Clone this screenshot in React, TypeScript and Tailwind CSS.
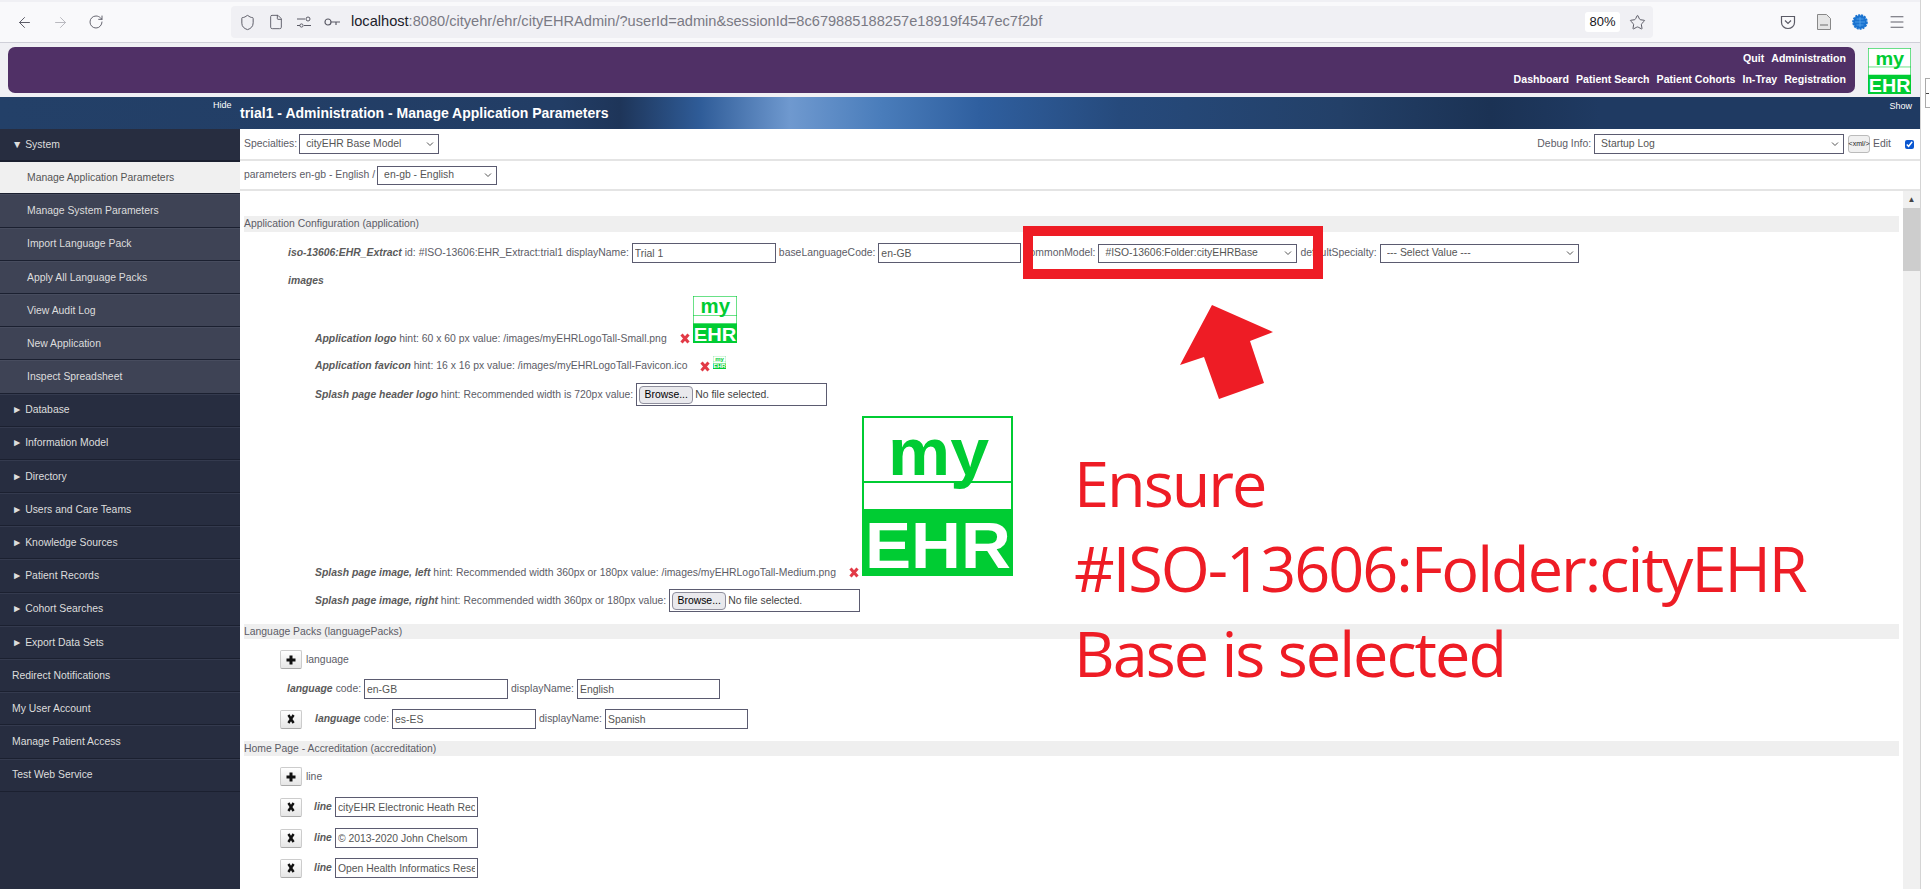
import React from 'react';
import { ArrowLeft, ArrowRight, RotateCw, Shield, File, Star, Menu } from 'lucide-react';

const systemItems = [
  'Manage System Parameters',
  'Import Language Pack',
  'Apply All Language Packs',
  'View Audit Log',
  'New Application',
  'Inspect Spreadsheet',
];

const folders = [
  'Database',
  'Information Model',
  'Directory',
  'Users and Care Teams',
  'Knowledge Sources',
  'Patient Records',
  'Cohort Searches',
  'Export Data Sets',
];

const links = ['Redirect Notifications', 'My User Account', 'Manage Patient Access', 'Test Web Service'];

const Logo: React.FC<{ w: number; h: number }> = ({ w, h }) => (
  <svg width={w} height={h} viewBox="0 0 151 160" preserveAspectRatio="none" className="shrink-0 self-start">
    <rect x="1" y="1" width="149" height="158" fill="#fff" stroke="#00cc33" strokeWidth="2" />
    <rect x="0" y="65" width="151" height="2" fill="#00cc33" />
    <rect x="0" y="93" width="151" height="67" fill="#00cc33" />
    <text x="26" y="59" fontFamily="Liberation Sans, sans-serif" fontWeight="700" fontSize="67" fill="#00cc33" textLength="101" lengthAdjust="spacingAndGlyphs">my</text>
    <text x="3" y="152" fontFamily="Liberation Sans, sans-serif" fontWeight="700" fontSize="64" fill="#fff" textLength="146" lengthAdjust="spacingAndGlyphs">EHR</text>
  </svg>
);

const Chevron = () => (
  <svg width="8" height="5" viewBox="0 0 8 5" className="absolute right-[5px] top-1/2 -translate-y-1/2 pointer-events-none">
    <path d="M1 1l3 3 3-3" fill="none" stroke="#555" strokeWidth="1" />
  </svg>
);

const Select: React.FC<{ value: string; className: string }> = ({ value, className }) => (
  <div className={`relative shrink-0 ${className}`}>
    <select
      defaultValue={value}
      className="appearance-none w-full h-full border border-[#5b5b70] bg-white pl-[6px] text-[10.4px] text-[#555] outline-none"
    >
      <option>{value}</option>
    </select>
    <Chevron />
  </div>
);

const Field: React.FC<{ value: string; className: string }> = ({ value, className }) => (
  <input
    readOnly
    defaultValue={value}
    className={`shrink-0 h-[20px] border border-[#5b5b70] bg-white px-[2px] text-[10.4px] text-[#555] outline-none ${className}`}
  />
);

const FilePicker: React.FC<{ className: string }> = ({ className }) => (
  <div className={`shrink-0 w-[191px] h-[23px] border border-[#5b5b70] bg-white flex items-center pl-[2px] text-[10.4px] text-[#444] ${className}`}>
    <span className="h-[18px] w-[54px] mr-[2px] flex items-center justify-center rounded-[4px] border border-[#8f8f9d] bg-[#e9e9ed] text-black">Browse...</span>
    No file selected.
  </div>
);

const IconButton: React.FC<{ kind: 'plus' | 'x' }> = ({ kind }) => (
  <button className="shrink-0 w-[22px] h-[19px] flex items-center justify-center rounded-[2px] border border-[#ccc] border-b-[#aaa] bg-[linear-gradient(#fff,#e6e6e6)]">
    <svg width="10" height="10" viewBox="0 0 10 10">
      {kind === 'plus' ? (
        <path d="M5 .5v9M.5 5h9" stroke="#111" strokeWidth="3" />
      ) : (
        <path d="M2.4 1l5.2 8M7.6 1l-5.2 8" stroke="#111" strokeWidth="2.4" />
      )}
    </svg>
  </button>
);

const RedCross = () => (
  <svg width="10" height="11" viewBox="0 0 10 11" className="shrink-0">
    <path d="M1.5 1.5l7 8M8.5 1.5l-7 8" stroke="#e23a46" strokeWidth="3" />
  </svg>
);

const Heading: React.FC<{ text: string; className: string }> = ({ text, className }) => (
  <div className={`flex items-center bg-[#efefef] mr-[4px] text-[10.4px] text-[#5c5c66] ${className}`}>{text}</div>
);

const Label: React.FC<{ children: React.ReactNode }> = ({ children }) => (
  <b className="italic font-bold text-[#5a5a5a]">{children}</b>
);

const BrowserBar = () => (
  <div className="h-[43px] shrink-0 flex items-center bg-[#f9f9fb] border-b border-[#cfcfd8] border-t-2 border-t-[#f0f0f4] text-[#5b5b66]">
    <ArrowLeft size={17} strokeWidth={1.4} className="ml-[16px]" />
    <ArrowRight size={17} strokeWidth={1.4} className="ml-[19px] text-[#b8b8be]" />
    <RotateCw size={16} strokeWidth={1.4} className="ml-[19px]" />
    <div className="ml-[127px] w-[1422px] h-[32px] flex items-center rounded-[4px] bg-[#f0f0f4]">
      <Shield size={17} strokeWidth={1.4} className="ml-[8px]" />
      <File size={16} strokeWidth={1.4} className="ml-[12px]" />
      <svg width="16" height="16" viewBox="0 0 16 16" className="ml-[12px]" fill="none" stroke="currentColor">
        <path d="M1 5h8M1 11.5h3M8 11.5h7" />
        <circle cx="12" cy="5" r="2" />
        <circle cx="5.5" cy="11.5" r="1.6" />
      </svg>
      <svg width="16" height="12" viewBox="0 0 16 12" className="ml-[12px]" fill="none" stroke="currentColor" strokeWidth="1.2">
        <circle cx="4" cy="6" r="3" />
        <path d="M7 6h9M12 6v3" />
      </svg>
      <div className="ml-[11px] flex-1 font-['Liberation_Sans',sans-serif] text-[14.6px] text-[#7a7a84] whitespace-nowrap">
        <span className="text-[#20202a]">localhost</span>:8080/cityehr/ehr/cityEHRAdmin/?userId=admin&amp;sessionId=8c679885188257e18919f4547ec7f2bf
      </div>
      <div className="w-[35px] h-[20px] mr-[9px] flex items-center justify-center rounded-[3px] bg-white text-[13px] text-[#15141a]">80%</div>
      <Star size={17} strokeWidth={1.4} className="mr-[7px]" />
    </div>
    <svg width="16" height="16" viewBox="0 0 16 16" className="ml-[127px]" fill="none" stroke="currentColor" strokeWidth="1.2">
      <path d="M1.5 2.5h13v6a6.5 6 0 0 1-13 0z" />
      <path d="M5 6.5l3 3 3-3" />
    </svg>
    <svg width="14" height="16" viewBox="0 0 14 16" className="ml-[21px]">
      <path d="M.5.5h9l4 4v11H.5z" fill="#e6e6e6" stroke="#888" />
      <rect x="3" y="10" width="8" height="2" fill="#aaa" />
    </svg>
    <svg width="16" height="16" viewBox="0 0 16 16" className="ml-[21px]">
      <circle cx="8" cy="8" r="6.8" fill="#1a73d0" stroke="#1a73d0" strokeDasharray="2 1" strokeWidth="2" />
      <path d="M3 8h10M8 3v10M4.5 5h7M4.5 11h7" stroke="#63aef0" strokeWidth=".7" />
    </svg>
    <Menu size={18} strokeWidth={1.3} className="ml-[20px]" />
  </div>
);

const TopHeader = () => (
  <div className="h-[54px] shrink-0 flex items-start bg-[#f0f0f4] pt-[4px] pl-[8px]">
    <div className="w-[1847px] h-[46px] rounded-[7px] bg-[#503066] flex flex-col items-end pr-[9px] text-[10.6px] font-bold text-white">
      <div className="mt-[5px] h-[12px] leading-[12px] flex gap-[7px]">
        <span>Quit</span>
        <span>Administration</span>
      </div>
      <div className="mt-[9px] h-[12px] leading-[12px] flex gap-[7px]">
        <span>Dashboard</span>
        <span>Patient Search</span>
        <span>Patient Cohorts</span>
        <span>In-Tray</span>
        <span>Registration</span>
      </div>
    </div>
    <div className="ml-[13px] mt-[1px]">
      <Logo w={43} h={46} />
    </div>
  </div>
);

const Banner = () => (
  <div className="h-[32px] shrink-0 relative flex items-center pl-[240px] bg-[linear-gradient(90deg,#234068_0px,#223d65_560px,#1e3559_620px,#2f5c98_700px,#6f99cf_790px,#4a7dbb_880px,#2f5f9f_980px,#264a7c_1120px,#234068_1340px,#1b3254_1490px,#1f3a62_1600px,#1f3a62_1920px)] text-white">
    <span className="absolute left-[213px] top-[2px] text-[9px]">Hide</span>
    <span className="text-[14px] font-bold">trial1 - Administration - Manage Application Parameters</span>
    <span className="absolute right-[8px] top-[3px] text-[9px]">Show</span>
  </div>
);

const Sidebar = () => (
  <div className="w-[240px] shrink-0 bg-[#272d40] text-[10.4px] text-[#ddd]">
    <div className="h-[33.2px] pl-[12px] flex items-center border-b-2 border-[#1b2030]">▼&nbsp;System</div>
    <div className="h-[32.2px] pl-[27px] flex items-center bg-[#f0f0f0] text-[#555] border-b border-[#1b2030]">Manage Application Parameters</div>
    {systemItems.map(item => (
      <div key={item} className="h-[33.2px] pl-[27px] flex items-center bg-[#3e4355] border-b border-[#1b2030] border-t border-t-[#474c5e]">
        {item}
      </div>
    ))}
    {folders.map(item => (
      <div key={item} className="h-[33.2px] pl-[12px] flex items-center border-b border-[#1b2030] border-t border-t-[#343a4e]">
        ►&nbsp;{item}
      </div>
    ))}
    {links.map(item => (
      <div key={item} className="h-[33.2px] pl-[12px] flex items-center border-b border-[#1b2030] border-t border-t-[#343a4e]">
        {item}
      </div>
    ))}
  </div>
);

const Content = () => (
  <div className="flex-1 min-w-0 pl-[4px] text-[10.4px] text-[#5c5c66] whitespace-nowrap">
    <Heading text="Application Configuration (application)" className="mt-[25px] h-[16px]" />

    <div className="mt-[11px] h-[20px] ml-[44px] flex items-center gap-[3px]">
      <Label>iso-13606:EHR_Extract</Label>
      <span>id: #ISO-13606:EHR_Extract:trial1 displayName:</span>
      <Field value="Trial 1" className="w-[144px]" />
      <span>baseLanguageCode:</span>
      <Field value="en-GB" className="w-[143px]" />
      <span>commonModel:</span>
      <Select value="#ISO-13606:Folder:cityEHRBase" className="w-[199px] h-[19px]" />
      <span>defaultSpecialty:</span>
      <Select value="--- Select Value ---" className="w-[199px] h-[19px]" />
    </div>

    <div className="mt-[10px] h-[16px] ml-[44px] flex items-center">
      <Label>images</Label>
    </div>

    <div className="mt-[7px] h-[49px] ml-[71px] flex items-end gap-[3px]">
      <span className="leading-[12px]"><Label>Application logo</Label> hint: 60 x 60 px value: /images/myEHRLogoTall-Small.png</span>
      <span className="ml-[10px] mb-[1px]"><RedCross /></span>
      <Logo w={44} h={47} />
    </div>

    <div className="mt-[11px] h-[20px] ml-[71px] flex items-center gap-[3px]">
      <span><Label>Application favicon</Label> hint: 16 x 16 px value: /images/myEHRLogoTall-Favicon.ico</span>
      <span className="ml-[10px]"><RedCross /></span>
      <Logo w={13} h={13} />
    </div>

    <div className="mt-[7px] h-[23px] ml-[71px] flex items-center gap-[3px]">
      <span><Label>Splash page header logo</Label> hint: Recommended width is 720px value:</span>
      <FilePicker className="" />
    </div>

    <div className="mt-[10px] h-[163px] ml-[71px] flex items-end gap-[3px]">
      <span className="leading-[12px]"><Label>Splash page image, left</Label> hint: Recommended width 360px or 180px value: /images/myEHRLogoTall-Medium.png</span>
      <span className="ml-[10px] mb-[1px]"><RedCross /></span>
      <Logo w={151} h={160} />
    </div>

    <div className="mt-[10px] h-[23px] ml-[71px] flex items-center gap-[3px]">
      <span><Label>Splash page image, right</Label> hint: Recommended width 360px or 180px value:</span>
      <FilePicker className="" />
    </div>

    <Heading text="Language Packs (languagePacks)" className="mt-[12px] h-[15px]" />

    <div className="mt-[11px] h-[19px] ml-[36px] flex items-center gap-[4px]">
      <IconButton kind="plus" />
      <span>language</span>
    </div>

    <div className="mt-[10px] h-[20px] ml-[43px] flex items-center gap-[3px]">
      <Label>language</Label>
      <span>code:</span>
      <Field value="en-GB" className="w-[144px]" />
      <span>displayName:</span>
      <Field value="English" className="w-[143px]" />
    </div>

    <div className="mt-[10px] h-[20px] ml-[36px] flex items-center gap-[3px]">
      <IconButton kind="x" />
      <span className="ml-[10px]"><Label>language</Label></span>
      <span>code:</span>
      <Field value="es-ES" className="w-[144px]" />
      <span>displayName:</span>
      <Field value="Spanish" className="w-[143px]" />
    </div>

    <Heading text="Home Page - Accreditation (accreditation)" className="mt-[12px] h-[15px]" />

    <div className="mt-[11px] h-[19px] ml-[36px] flex items-center gap-[4px]">
      <IconButton kind="plus" />
      <span>line</span>
    </div>

    {['cityEHR Electronic Heath Records', '© 2013-2020 John Chelsom', 'Open Health Informatics Research'].map((line, idx) => (
      <div key={line} className={`${idx === 2 ? 'mt-[10px]' : 'mt-[11px]'} h-[20px] ml-[36px] flex items-center gap-[3px]`}>
        <IconButton kind="x" />
        <span className="ml-[9px]"><Label>line</Label></span>
        <Field value={line} className="w-[143px]" />
      </div>
    ))}
  </div>
);

const App: React.FC = () => {
  return (
    <div className="relative w-[1930px] h-[889px] overflow-hidden flex bg-white font-['Liberation_Sans',sans-serif]">
      <div className="w-[1920px] h-full flex flex-col">
        <BrowserBar />
        <TopHeader />
        <Banner />
        <div className="flex-1 min-h-0 flex">
          <Sidebar />
          <div className="flex-1 min-w-0 flex flex-col text-[10.4px] text-[#5c5c66]">
            <div className="h-[32px] shrink-0 pl-[4px] pr-[6px] flex items-center border-b-2 border-[#e4e4e4]">
              <span>Specialties:</span>
              <Select value="cityEHR Base Model" className="ml-[2px] w-[140px] h-[20px]" />
              <span className="ml-auto mr-[3px]">Debug Info:</span>
              <Select value="Startup Log" className="w-[250px] h-[20px]" />
              <span className="ml-[4px] w-[22px] h-[18px] flex items-center justify-center rounded-[3px] border border-[#bbb] bg-[#f0f0f0] text-[7px] text-[#222]">&lt;xml/&gt;</span>
              <span className="ml-[3px]">Edit</span>
              <input type="checkbox" readOnly checked className="ml-[14px] w-[9px] h-[9px] accent-[#0b57d0]" />
            </div>
            <div className="h-[30px] shrink-0 pl-[4px] flex items-center border-b-2 border-[#e4e4e4]">
              <span>parameters en-gb - English /</span>
              <Select value="en-gb - English" className="ml-[2px] w-[120px] h-[19px]" />
            </div>
            <div className="flex-1 min-h-0 flex">
              <Content />
              <div className="w-[17px] shrink-0 bg-[#f0f0f0] flex flex-col items-center">
                <div className="h-[17px] text-[8px] leading-[17px] text-[#444]">▲</div>
                <div className="w-full h-[63px] bg-[#cdcdcd]" />
              </div>
            </div>
          </div>
        </div>
      </div>
      <div className="w-[10px] h-full border-l border-[#d4d4d4] bg-white pt-[78px]">
        <div className="h-[30px] ml-[4px] border border-r-0 border-[#aaa] flex items-center">
          <div className="w-[3px] h-px bg-[#444]" />
        </div>
      </div>

      {/* annotation drawn over the page */}
      <div className="absolute left-[1023px] top-[226px] w-[300px] h-[53px] border-[10px] border-[#ee1c25]" />
      <svg width="95" height="95" viewBox="0 0 95 95" className="absolute left-[1180px] top-[305px]">
        <polygon points="32,0 93,27 70,36 84,78 39,94 24,52 0,60" fill="#ee1c25" />
      </svg>
      <div className="absolute left-[1074px] top-[440px] font-['Open_Sans',sans-serif] text-[63px] leading-[85px] text-[#ee1c25] whitespace-nowrap tracking-[-2px]">
        <div>Ensure</div>
        <div>#ISO-13606:Folder:cityEHR</div>
        <div>Base is selected</div>
      </div>
    </div>
  );
};

export default App;
